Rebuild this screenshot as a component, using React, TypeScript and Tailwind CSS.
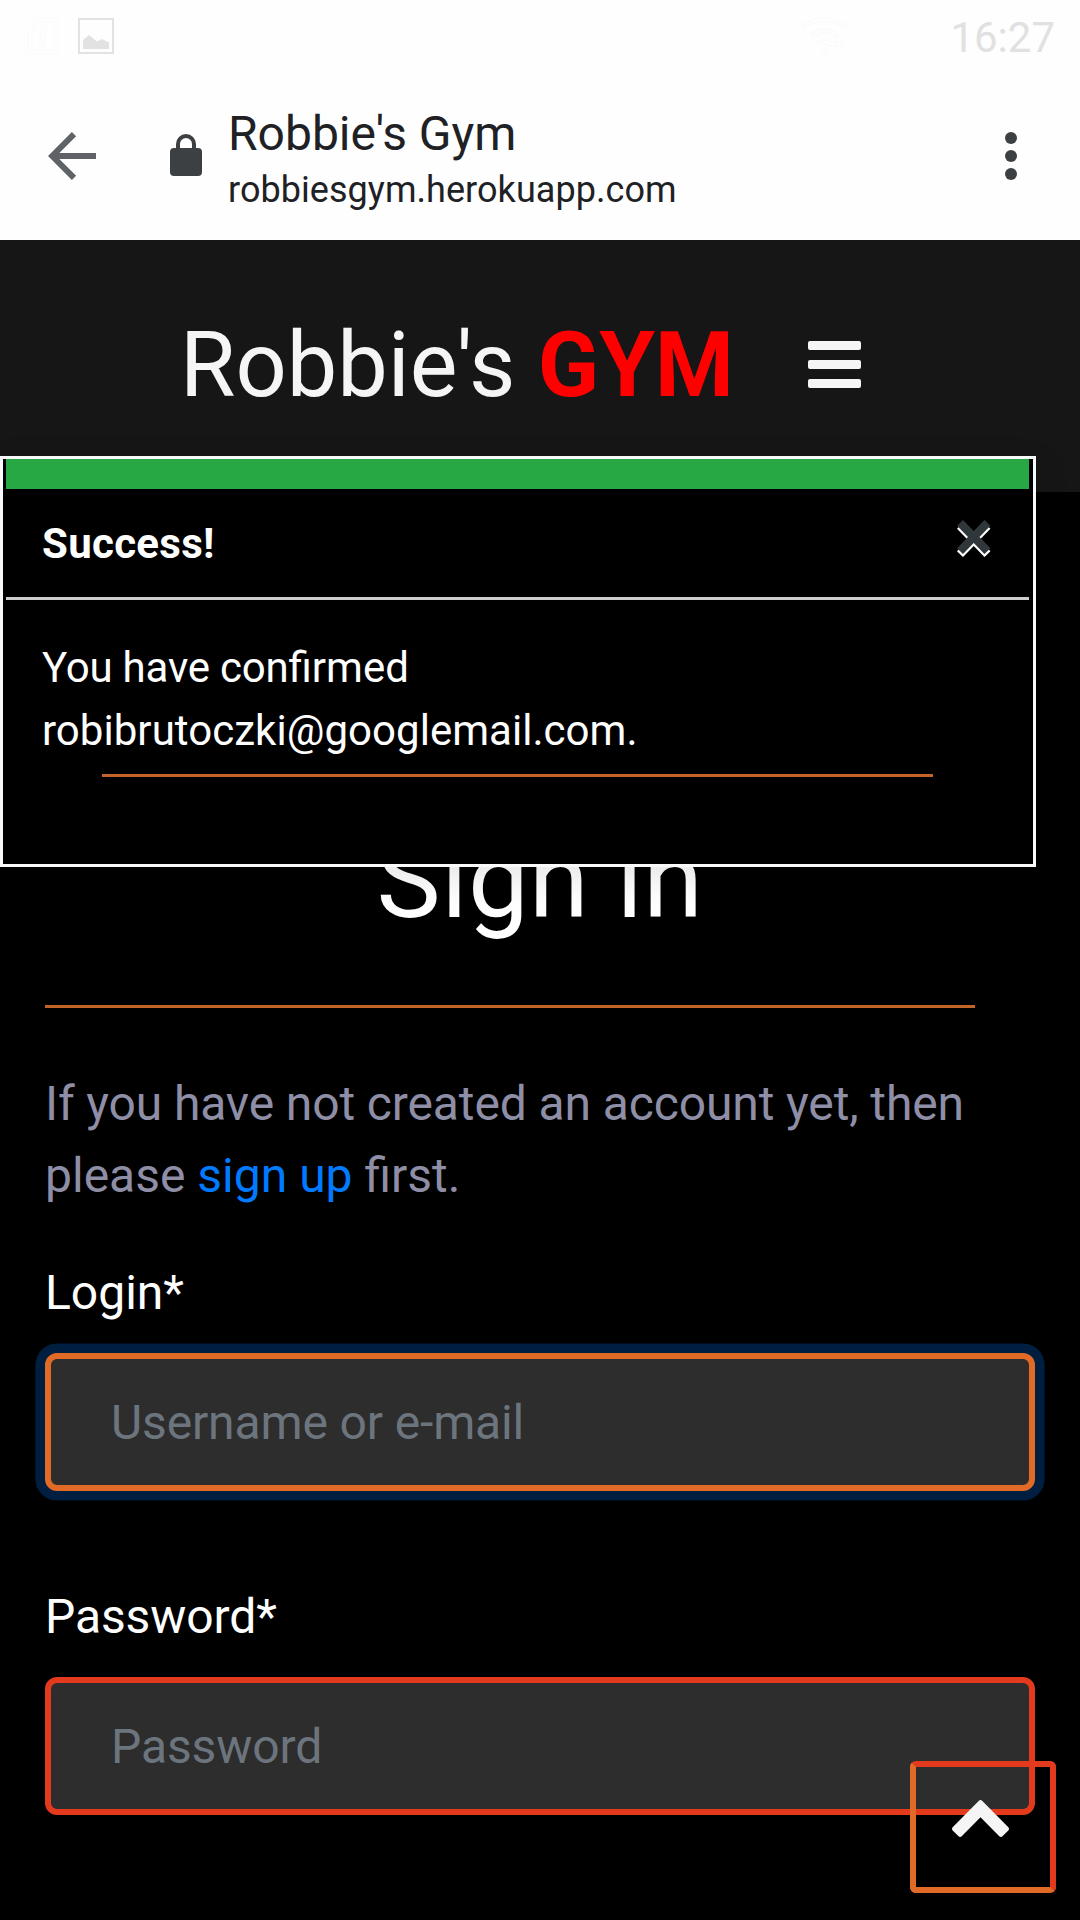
import React from 'react';

function StatusBar() {
  return (
    <div className="flex h-[72px] items-start pt-[17px] pl-[27px] pr-[25px]">
      <svg className="h-[38px] w-8" viewBox="0 0 32 38" fill="none" stroke="#fafafa" strokeWidth="1">
        <path d="M11 .8h16a4 4 0 0 1 4 4v28a4 4 0 0 1-4 4H5a4 4 0 0 1-4-4V14z" />
        <path d="M12 5h13a2 2 0 0 1 2 2v24a2 2 0 0 1-2 2H7a2 2 0 0 1-2-2V15z" />
        <rect x="14" y="10" width="4" height="15" rx="2" />
        <circle cx="16" cy="28" r="2" />
      </svg>
      <svg className="mt-px ml-[19px] size-9" viewBox="0 0 36 36">
        <rect x="1" y="1" width="34" height="34" fill="none" stroke="#e2e2e2" strokeWidth="2" />
        <path fill="#e2e2e2" d="M5 31V22l6-5 8 6.500 5-2.500 7 3.500V31z" />
      </svg>
      <svg className="ml-auto h-[38px] w-[48px]" viewBox="0 0 48 38" fill="none" stroke="#fafafa" strokeWidth="1">
        <path d="M1 8Q24-6 47 8l-2 3Q24-2 3 11z" />
        <path d="M10 17Q24 7 38 17l-2 3Q24 11 12 20z" />
        <path d="M16 26q8-6 15 0l-2 3q-6-4-11 0z" />
        <circle cx="24" cy="34" r="3" />
        <path d="M38 18l5 7H33zM38 36l5-7H33z" />
      </svg>
      <span className="ml-[101px] text-[42px] leading-[42px] text-[#e1e1e1]">16:27</span>
    </div>
  );
}

function BrowserBar() {
  return (
    <div className="flex h-[168px] items-start pl-[48px] pr-[63px] text-[#202124]">
      <svg className="mt-[60px] h-12 w-12" viewBox="0 0 48 48" fill="none" stroke="#5f6368" strokeWidth="6">
        <path d="M48 24H5M26 2.200 4.200 24 26 45.800" />
      </svg>
      <svg className="mt-[62px] ml-[74px] h-[42px] w-8" viewBox="0 0 32 42">
        <rect y="14" width="32" height="28" rx="4" fill="#3c4043" />
        <path d="M8 15V10a8 8 0 0 1 16 0v5" fill="none" stroke="#3c4043" strokeWidth="4" />
      </svg>
      <div className="mt-[34px] ml-[26px] flex flex-col">
        <span className="text-[48px] leading-[56px]">Robbie's Gym</span>
        <span className="text-[36px] leading-[56px] tracking-[0.05px]">robbiesgym.herokuapp.com</span>
      </div>
      <div className="mt-[60px] ml-auto flex flex-col gap-[6px]">
        <span className="size-3 rounded-full bg-[#3c4043]" />
        <span className="size-3 rounded-full bg-[#3c4043]" />
        <span className="size-3 rounded-full bg-[#3c4043]" />
      </div>
    </div>
  );
}

function SiteHeader() {
  return (
    <header className="flex h-[252px] items-center bg-[#161616] pl-[180px]">
      <h2 className="text-[90px] leading-[108px] whitespace-nowrap text-[#f5f5f5]">
        Robbie's <span className="font-bold text-[#ff0000]">GYM</span>
      </h2>
      <button className="mb-[3px] ml-[74px] flex w-[53px] flex-col gap-[10px]" aria-label="Menu">
        <span className="h-[9px] w-full rounded-[2px] bg-[#f5f5f5]" />
        <span className="h-[9px] w-full rounded-[2px] bg-[#f5f5f5]" />
        <span className="h-[9px] w-full rounded-[2px] bg-[#f5f5f5]" />
      </button>
    </header>
  );
}

function Toast() {
  return (
    <div className="absolute top-[456px] left-0 h-[411px] w-[1036px] border-[3px] border-[#f8f9fa] bg-black pr-1 pl-[3px] text-[42px] leading-[63px] text-white shadow-[0_12px_36px_rgba(0,0,0,0.1)]">
      <div className="h-[30px] bg-[#28a745]" />
      <div className="flex h-[111px] items-center justify-between border-b-[3px] border-[#cccecd] px-9">
        <strong className="font-bold tracking-[0.3px]">Success!</strong>
        <button className="-mt-[14px] text-[72px] leading-[63px] font-bold text-[#30373b] [text-shadow:0_3px_0_#fff]" aria-label="Close">
          ×
        </button>
      </div>
      <div className="px-9 pt-9">
        <p>
          <span className="tracking-[-0.2px]">You have con</span>firmed
          <br />
          <span className="tracking-[0.04px]">robibrutoczki@googlemail.com.</span>
        </p>
        <div className="mt-3 ml-[60px] h-[3px] w-[831px] bg-[#c06429]" />
      </div>
    </div>
  );
}

function SignIn() {
  return (
    <main className="px-[45px] pt-[323px] text-[48px] leading-[72px] text-white">
      <h1 className="text-center text-[108px] leading-[130px] tracking-[0.5px]">Sign in</h1>
      <div className="mt-[60px] h-[3px] w-[930px] bg-[#c06429]" />
      <p className="mt-[60px] text-[#8e8ea6]">
        <span className="tracking-[-0.12px]">If you have not created an account yet, then</span>{' '}
        please <a className="text-[#007bff]">sign up</a> first.
      </p>
      <label className="mt-[45px] block">Login*</label>
      <input
        className="mt-[24px] block h-[138px] w-full rounded-[12px] border-[6px] border-[#e06a26] bg-[#2d2d2d] px-[60px] tracking-[-0.13px] shadow-[0_0_0_9.6px_#001f40] outline-none placeholder:text-[#6c757d]"
        placeholder="Username or e-mail"
      />
      <label className="mt-[90px] block tracking-[-0.1px]">Password*</label>
      <input
        className="mt-[24px] block h-[138px] w-full rounded-[12px] border-[6px] border-[#e33a1d] bg-[#2d2d2d] px-[60px] tracking-[-0.1px] outline-none placeholder:text-[#6c757d]"
        placeholder="Password"
      />
    </main>
  );
}

function ScrollTop() {
  return (
    <button
      className="absolute top-[1761px] left-[910px] flex h-[132px] w-[146px] justify-center rounded-[6px] border-[6px] border-t-[#e33a1d] border-r-[#e33a1d] border-b-[#e06a26] border-l-[#e06a26] pt-[33px]"
      aria-label="Back to top"
    >
      <svg className="mr-[6px] h-[37px] w-[57px]" viewBox="90 480 1612 1035" preserveAspectRatio="none">
        <path
          fill="#f5f5f5"
          d="M1683 1331l-166 165q-19 19-45 19t-45-19l-531-531-531 531q-19 19-45 19t-45-19l-166-165q-19-19-19-45.500t19-45.500l742-741q19-19 45-19t45 19l742 741q19 19 19 45.500t-19 45.500z"
        />
      </svg>
    </button>
  );
}

export default function App() {
  return (
    <div className="relative h-[1920px] w-[1080px] overflow-hidden bg-black font-[Roboto,sans-serif]">
      <div className="bg-[#fefefe]">
        <StatusBar />
        <BrowserBar />
      </div>
      <SiteHeader />
      <SignIn />
      <Toast />
      <ScrollTop />
    </div>
  );
}
